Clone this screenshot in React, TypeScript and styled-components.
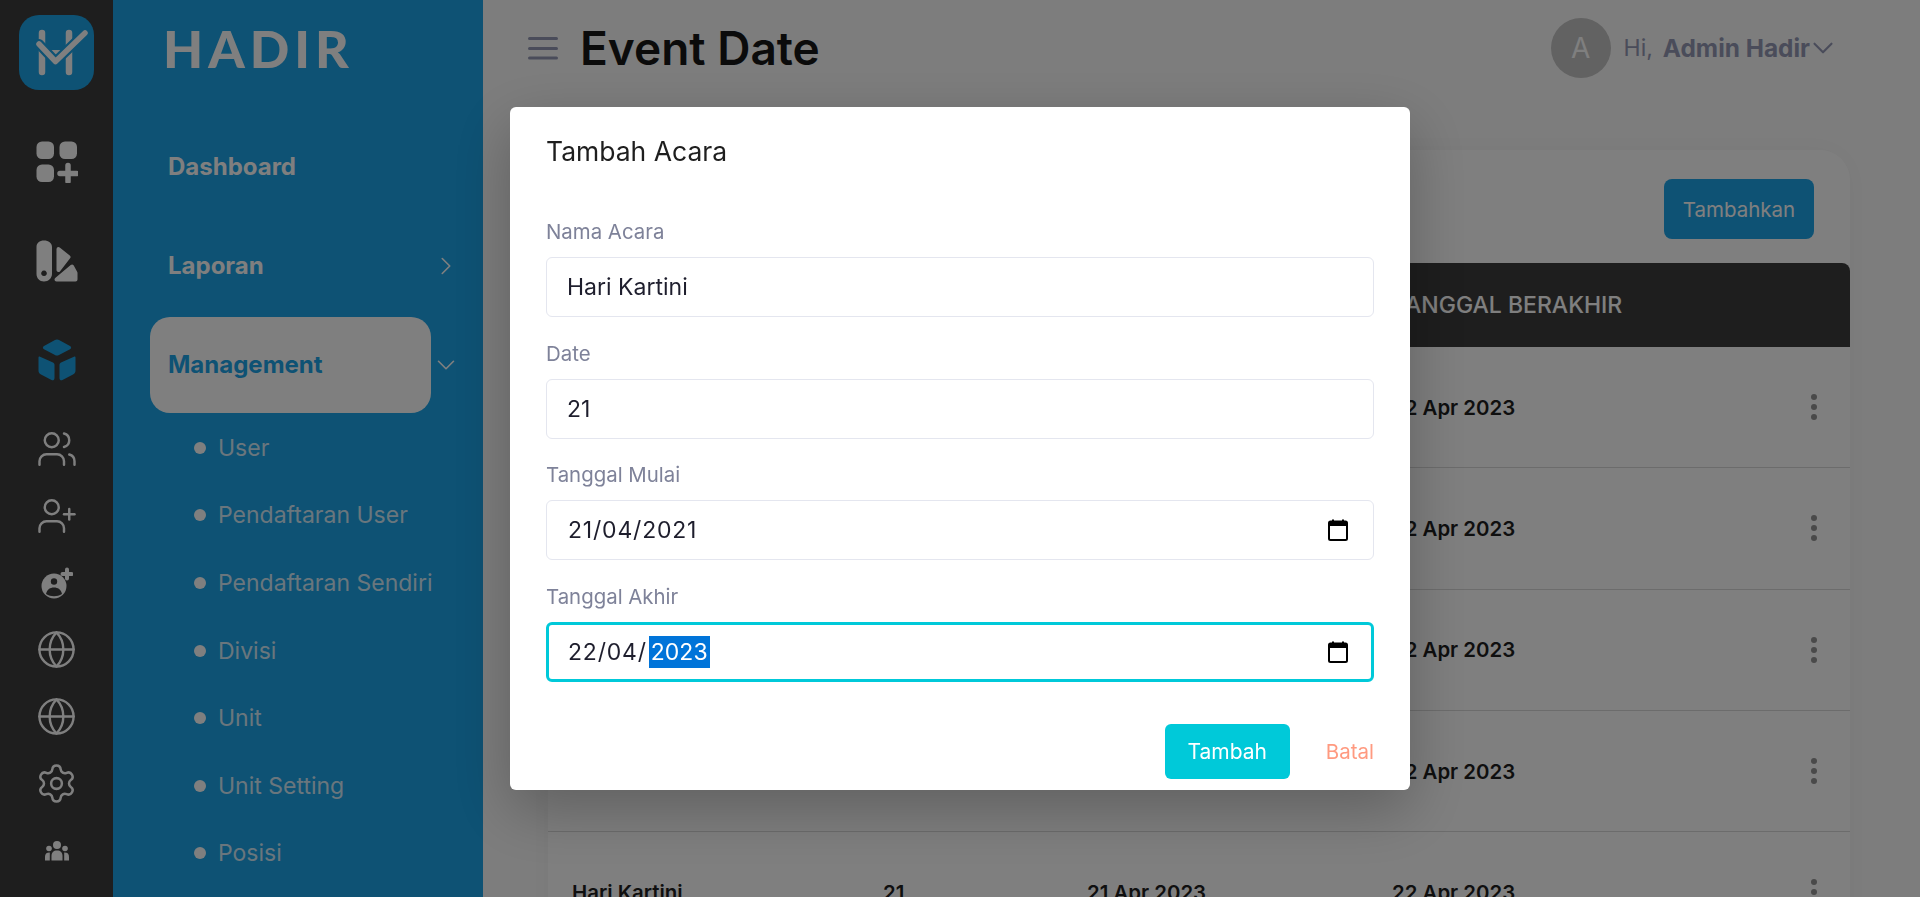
import styled, { createGlobalStyle } from 'styled-components';
import { ChevronDown, ChevronRight, Globe, Settings, UserPlus, Users } from 'lucide-react';

const GlobalStyle = createGlobalStyle`
    html, body {
        margin: 0;
        height: 100%;
        overflow: hidden;
        background: #fbfbfb;
    }
    * {
        box-sizing: border-box;
    }
    body {
        font-family: "Inter", "Noto Sans", sans-serif;
    }
`;

const subMenu = ['User', 'Pendaftaran User', 'Pendaftaran Sendiri', 'Divisi', 'Unit', 'Unit Setting', 'Posisi'];

const LogoMark = () => (
    <svg width="75" height="75" viewBox="0 0 75 75" fill="none">
        <path d="M23 18V57M50 18V57" stroke="#fff" strokeWidth="6.5" strokeLinecap="round" />
        <path d="M28 35h17l-8.5 8z" fill="#fff" />
        <path d="M20 29L36.5 46.5L66 18" stroke="#1CA4E8" strokeWidth="10" strokeLinecap="round" strokeLinejoin="round" />
        <path d="M20 29L36.5 46.5L66 18" stroke="#fff" strokeWidth="5.5" strokeLinecap="round" strokeLinejoin="round" />
    </svg>
);

const GridPlusIcon = () => (
    <svg width="42" height="42" viewBox="0 0 42 42" fill="#fff">
        <rect x="0.5" y="0.5" width="17.5" height="17.5" rx="5.5" />
        <rect x="23.5" y="0.5" width="17.5" height="17.5" rx="5.5" />
        <rect x="0.5" y="23.5" width="17.5" height="17.5" rx="5.5" />
        <path d="M32 24.5V40.5M24 32.5H40.5" stroke="#fff" strokeWidth="5.5" strokeLinecap="round" />
    </svg>
);

const SwatchIcon = () => (
    <svg width="42" height="42" viewBox="0 0 42 42" fill="#fff">
        <path fillRule="evenodd" d="M8 0.5C12.5 0.5 16 3 16 7V34C16 38 12.5 41.5 8 41.5C3.5 41.5 0.5 38 0.5 34V7C0.5 3 3.5 0.5 8 0.5ZM8 30.5a2.8 2.8 0 1 0 0.01 0Z" />
        <path d="M22.5 9L32.5 17L22.5 30Z" stroke="#fff" strokeWidth="4" strokeLinejoin="round" />
        <path d="M20.5 39.5L36 26.5L39.5 33V39.5Z" stroke="#fff" strokeWidth="4" strokeLinejoin="round" />
    </svg>
);

const CubeIcon = () => (
    <svg width="38" height="42" viewBox="0 0 38 42" fill="#1CA4E8">
        <path d="M16.5 1.2C18 0.4 20 0.4 21.5 1.2L32 7C33.5 8 33.5 9.5 32 10.3L21 16C19.5 16.8 18 16.8 17 16L6 10.3C4.5 9.5 4.5 8 6 7Z" />
        <path d="M1.5 17.5L15 23.5C16 24 16.5 25 16.5 26V39C16.5 41 15 41.8 13.5 41L3 35.5C1.2 34.5 0.5 33.2 0.5 31.5V18.5C0.5 17.5 1 17.2 1.5 17.5Z" />
        <path d="M36.5 17.5L23 23.5C22 24 21.5 25 21.5 26V39C21.5 41 23 41.8 24.5 41L35 35.5C36.8 34.5 37.5 33.2 37.5 31.5V18.5C37.5 17.5 37 17.2 36.5 17.5Z" />
    </svg>
);

const UserBadgeIcon = () => (
    <svg width="32" height="32" viewBox="0 0 32 32" fill="none">
        <circle cx="13" cy="19" r="12.5" fill="#fff" />
        <circle cx="13" cy="14.5" r="3.2" fill="#3c3c3c" />
        <path d="M5 27C6 22.5 9 20.5 13 20.5C17 20.5 20 22.5 21 27C16 30 10 30 5 27Z" fill="#3c3c3c" />
        <path d="M26 2.5V11.5M21.5 7H30.5" stroke="#fff" strokeWidth="4" strokeLinecap="round" />
    </svg>
);

const PeopleIcon = () => (
    <svg width="24" height="20" viewBox="0 0 24 20" fill="#fff">
        <circle cx="12" cy="4" r="4" />
        <circle cx="4" cy="7.5" r="2.8" />
        <circle cx="20" cy="7.5" r="2.8" />
        <path d="M6.5 19.5V15C6.5 11.5 8.5 9.5 12 9.5C15.5 9.5 17.5 11.5 17.5 15V19.5Z" />
        <path d="M0 19.5V16C0 13 1.5 11.5 4.8 11.6C4.8 11.6 4.8 14 4.8 19.5Z" />
        <path d="M24 19.5V16C24 13 22.5 11.5 19.2 11.6C19.2 11.6 19.2 14 19.2 19.5Z" />
    </svg>
);

const Hamburger = () => (
    <svg width="30" height="24" viewBox="0 0 30 24" stroke="#9499B5" strokeWidth="3" strokeLinecap="round">
        <path d="M1.5 2.5H28.5M1.5 12.5H28.5M1.5 22H28.5" />
    </svg>
);

const CalendarIcon = () => (
    <svg width="20" height="22" viewBox="0 0 20 22" fill="none">
        <path d="M5 0.5V3M15 0.5V3" stroke="#000" strokeWidth="2" />
        <rect x="1" y="2.5" width="18" height="18.5" rx="1.5" stroke="#000" strokeWidth="2" />
        <rect x="1" y="2.5" width="18" height="4.5" fill="#000" />
    </svg>
);

const App = () => {
    return (
        <Page>
            <GlobalStyle />
            <Rail>
                <RailLogo><LogoMark /></RailLogo>
                <RailBigGroup>
                    <RailBig><GridPlusIcon /></RailBig>
                    <RailBig><SwatchIcon /></RailBig>
                    <RailBig><CubeIcon /></RailBig>
                </RailBigGroup>
                <RailSmallGroup>
                    <RailSmall><Users size={42} strokeWidth={1.4} /></RailSmall>
                    <RailSmall><UserPlus size={42} strokeWidth={1.4} /></RailSmall>
                    <RailSmall><UserBadgeIcon /></RailSmall>
                    <RailSmall><Globe size={41} strokeWidth={1.4} /></RailSmall>
                    <RailSmall><Globe size={41} strokeWidth={1.4} /></RailSmall>
                    <RailSmall><Settings size={43} strokeWidth={1.4} /></RailSmall>
                    <RailSmall><PeopleIcon /></RailSmall>
                </RailSmallGroup>
            </Rail>

            <Sidebar>
                <Brand>HADIR</Brand>
                <NavItem>Dashboard</NavItem>
                <NavItem>
                    Laporan
                    <NavChevron><ChevronRight size={30} strokeWidth={1.3} /></NavChevron>
                </NavItem>
                <NavItemActive>
                    <ActivePill>Management</ActivePill>
                    <NavChevron><ChevronDown size={30} strokeWidth={1.3} /></NavChevron>
                </NavItemActive>
                <SubList>
                    {subMenu.map(label => (
                        <SubItem key={label}>
                            <SubDot />
                            {label}
                        </SubItem>
                    ))}
                </SubList>
            </Sidebar>

            <Main>
                <Header>
                    <HeaderLeft>
                        <Hamburger />
                        <PageTitle>Event Date</PageTitle>
                    </HeaderLeft>
                    <UserArea>
                        <Avatar>A</Avatar>
                        <Greeting>Hi,</Greeting>
                        <UserName>Admin Hadir</UserName>
                        <ChevronDown size={34} strokeWidth={1.5} color="#9499B5" />
                    </UserArea>
                </Header>

                <Card>
                    <CardTop>
                        <AddButton>Tambahkan</AddButton>
                    </CardTop>
                    <TableHead>
                        <span>NAMA ACARA</span>
                        <span>DATE</span>
                        <span>TANGGAL MULAI</span>
                        <span>TANGGAL BERAKHIR</span>
                        <span />
                    </TableHead>
                    {[0, 1, 2, 3, 4].map(index => (
                        <TableRow key={index}>
                            <span>Hari Kartini</span>
                            <span>21</span>
                            <span>21 Apr 2023</span>
                            <span>22 Apr 2023</span>
                            <RowMenu><i /><i /><i /></RowMenu>
                        </TableRow>
                    ))}
                </Card>
            </Main>

            <Backdrop />
            <Modal>
                <ModalTitle>Tambah Acara</ModalTitle>
                <Field>
                    <FieldLabel>Nama Acara</FieldLabel>
                    <TextInput readOnly value="Hari Kartini" />
                </Field>
                <Field>
                    <FieldLabel>Date</FieldLabel>
                    <TextInput readOnly value="21" />
                </Field>
                <Field>
                    <FieldLabel>Tanggal Mulai</FieldLabel>
                    <DateBox>
                        <DateText>21/04/2021</DateText>
                        <CalendarIcon />
                    </DateBox>
                </Field>
                <Field>
                    <FieldLabel>Tanggal Akhir</FieldLabel>
                    <DateBox $focused>
                        <DateText>22/04/<Selected>2023</Selected></DateText>
                        <CalendarIcon />
                    </DateBox>
                </Field>
                <ModalActions>
                    <SubmitButton>Tambah</SubmitButton>
                    <CancelLink>Batal</CancelLink>
                </ModalActions>
            </Modal>
        </Page>
    );
};
export default App;

const Page = styled.div`
    display: flex;
    width: 100%;
    height: 100vh;
    overflow: hidden;
`;

const Rail = styled.aside`
    flex: 0 0 113px;
    display: flex;
    flex-direction: column;
    align-items: center;
    padding-top: 15px;
    background: #3c3c3c;
    color: #fff;
`;

const RailLogo = styled.div`
    width: 75px;
    height: 75px;
    border-radius: 20px;
    background: #1ca4e8;
`;

const RailBigGroup = styled.div`
    margin-top: 22px;
    width: 100%;
`;

const RailBig = styled.div`
    height: 99px;
    display: flex;
    align-items: center;
    justify-content: center;
`;

const RailSmallGroup = styled.div`
    margin-top: 6px;
    width: 100%;
`;

const RailSmall = styled.div`
    height: 67px;
    display: flex;
    align-items: center;
    justify-content: center;
`;

const Sidebar = styled.nav`
    flex: 0 0 370px;
    background: #1ca4e8;
    color: #fff;
`;

const Brand = styled.div`
    height: 117px;
    padding: 20px 0 0 50px;
    font-family: "Lato", sans-serif;
    font-size: 52px;
    line-height: 56px;
    font-weight: 900;
    letter-spacing: 5px;
`;

const NavItem = styled.div`
    position: relative;
    height: 99px;
    display: flex;
    align-items: center;
    padding-left: 55px;
    font-size: 24px;
    font-weight: 700;
`;

const NavChevron = styled.span`
    position: absolute;
    left: 318px;
    top: 50%;
    display: flex;
    transform: translateY(-50%);
`;

const NavItemActive = styled.div`
    position: relative;
    height: 99px;
    display: flex;
    align-items: center;
    padding-left: 37px;
`;

const ActivePill = styled.div`
    width: 281px;
    height: 96px;
    display: flex;
    align-items: center;
    padding-left: 18px;
    border-radius: 20px;
    background: #fff;
    color: #1ca4e8;
    font-size: 24px;
    font-weight: 700;
`;

const SubList = styled.div`
    padding-left: 81px;
`;

const SubItem = styled.div`
    height: 67.6px;
    display: flex;
    align-items: center;
    gap: 12px;
    font-size: 23px;
    color: rgba(255, 255, 255, 0.82);
    white-space: nowrap;
`;

const SubDot = styled.span`
    width: 12px;
    height: 12px;
    border-radius: 50%;
    background: #fff;
`;

const Main = styled.main`
    flex: 1;
    min-width: 0;
    padding: 0 70px 0 65px;
    background: #fbfbfb;
`;

const Header = styled.header`
    height: 150px;
    display: flex;
    align-items: flex-start;
    justify-content: space-between;
`;

const HeaderLeft = styled.div`
    display: flex;
    align-items: center;
    gap: 22px;
    height: 96px;
    margin-left: -20px;
`;

const PageTitle = styled.h1`
    margin: 0;
    font-size: 46px;
    font-weight: 600;
    color: #161616;
`;

const UserArea = styled.div`
    display: flex;
    align-items: center;
    height: 96px;
    margin-right: 10px;
    color: #9499b5;
    font-size: 23px;
`;

const Avatar = styled.div`
    width: 60px;
    height: 60px;
    margin-right: 13px;
    display: flex;
    align-items: center;
    justify-content: center;
    border-radius: 50%;
    background: #c4c4c4;
    color: #fff;
    font-size: 28px;
`;

const Greeting = styled.span`
    margin-right: 10px;
`;

const UserName = styled.span`
    margin-right: -4px;
    font-size: 24.4px;
    font-weight: 700;
`;

const Card = styled.section`
    border-radius: 30px 30px 0 0;
    background: #fff;
    box-shadow: 0 0 30px rgba(0, 0, 0, 0.04);
`;

const CardTop = styled.div`
    height: 113px;
    display: flex;
    justify-content: flex-end;
    padding: 29px 36px 0 0;
`;

const AddButton = styled.button`
    width: 150px;
    height: 60px;
    border: 0;
    border-radius: 8px;
    background: #1ca4e8;
    color: #fff;
    font: inherit;
    font-size: 20.5px;
`;

const columns = 'grid-template-columns: 311px 204px 305px 1fr 39px;';

const TableHead = styled.div`
    ${columns}
    display: grid;
    align-items: center;
    height: 84px;
    padding-left: 24px;
    border-radius: 8px 8px 0 0;
    background: #3c3c3c;
    color: #fff;
    font-size: 23px;
    font-weight: 500;
`;

const TableRow = styled.div`
    ${columns}
    display: grid;
    align-items: center;
    height: 121.3px;
    padding-left: 24px;
    border-bottom: 1px solid #d9d9d9;
    color: #1e1e1e;
    font-size: 20.4px;
    font-weight: 600;
`;

const RowMenu = styled.div`
    display: flex;
    flex-direction: column;
    gap: 4px;

    i {
        width: 6px;
        height: 6px;
        border-radius: 50%;
        background: #949494;
    }
`;

const Backdrop = styled.div`
    position: fixed;
    inset: 0;
    background: rgba(0, 0, 0, 0.5);
`;

const Modal = styled.div`
    position: fixed;
    left: 510px;
    top: 107px;
    width: 900px;
    height: 683px;
    padding: 0 36px;
    border-radius: 6px;
    background: #fff;
    box-shadow: 0 20px 60px rgba(0, 0, 0, 0.25);
`;

const ModalTitle = styled.h2`
    margin: 0 0 51px;
    padding-top: 28px;
    font-size: 26.5px;
    line-height: 32px;
    font-weight: 400;
    color: #1e1e1e;
`;

const Field = styled.div`
    margin-bottom: 22.6px;
`;

const FieldLabel = styled.label`
    display: block;
    margin-bottom: 11px;
    font-size: 20.4px;
    line-height: 28px;
    color: #7e8299;
`;

const TextInput = styled.input`
    display: block;
    width: 100%;
    height: 60px;
    padding: 0 20px;
    border: 1px solid #e4e6ef;
    border-radius: 6px;
    outline: 0;
    color: #1e1e2d;
    font-family: inherit;
    font-size: 23px;
`;

const DateBox = styled.div<{ $focused?: boolean }>`
    display: flex;
    align-items: center;
    justify-content: space-between;
    height: 60px;
    padding: 0 ${p => (p.$focused ? '23px' : '25px')} 0 ${p => (p.$focused ? '19px' : '21px')};
    border: ${p => (p.$focused ? '3px solid #00c9d9' : '1px solid #e4e6ef')};
    border-radius: 6px;
`;

const DateText = styled.span`
    color: #1e1e2d;
    font-size: 23px;
    letter-spacing: 0.8px;
`;

const Selected = styled.span`
    display: inline-block;
    margin-left: 2px;
    padding: 2px 2px;
    background: #0074d9;
    color: #fff;
    letter-spacing: 0;
`;

const ModalActions = styled.div`
    display: flex;
    align-items: center;
    justify-content: flex-end;
    gap: 36px;
    margin-top: 42px;
`;

const SubmitButton = styled.button`
    width: 125px;
    height: 55px;
    border: 0;
    border-radius: 6px;
    background: #00c9d9;
    color: #fff;
    font: inherit;
    font-size: 21px;
`;

const CancelLink = styled.span`
    color: #ff9a80;
    font-size: 20.5px;
`;
